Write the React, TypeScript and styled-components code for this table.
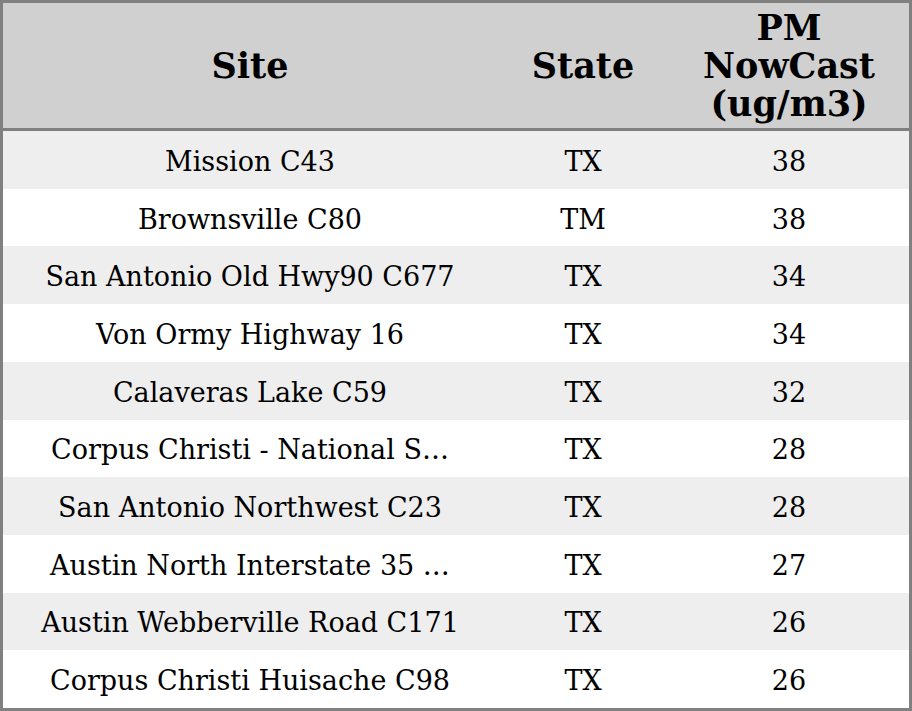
import React from 'react'
import styled, { createGlobalStyle } from 'styled-components'

const rows = [
    { site: 'Mission C43', state: 'TX', value: 38 },
    { site: 'Brownsville C80', state: 'TM', value: 38 },
    { site: 'San Antonio Old Hwy90 C677', state: 'TX', value: 34 },
    { site: 'Von Ormy Highway 16', state: 'TX', value: 34 },
    { site: 'Calaveras Lake C59', state: 'TX', value: 32 },
    { site: 'Corpus Christi - National Seashore C314', state: 'TX', value: 28 },
    { site: 'San Antonio Northwest C23', state: 'TX', value: 28 },
    { site: 'Austin North Interstate 35 C1068', state: 'TX', value: 27 },
    { site: 'Austin Webberville Road C171', state: 'TX', value: 26 },
    { site: 'Corpus Christi Huisache C98', state: 'TX', value: 26 },
]

// long site names are cut to 27 characters, as the source table does
const shorten = (name: string) => (name.length > 30 ? `${name.slice(0, 27)}\u2026` : name)

const App: React.FunctionComponent = () => (
    <>
        <GlobalStyle />
        <Table>
            <HeaderRow>
                <HeaderCell>Site</HeaderCell>
                <HeaderCell>State</HeaderCell>
                <HeaderCell>PM<br />NowCast<br />(ug/m3)</HeaderCell>
            </HeaderRow>
            {rows.map((row, i) => (
                <Row key={row.site} $striped={i % 2 === 0}>
                    <Cell>{shorten(row.site)}</Cell>
                    <Cell>{row.state}</Cell>
                    <Cell>{row.value}</Cell>
                </Row>
            ))}
        </Table>
    </>
)

export default App

const GlobalStyle = createGlobalStyle`
    html, body {
        margin: 0;
        padding: 0;
        background: #ffffff;
    }
    body {
        font-family: "DejaVu Serif", serif;
        color: #000000;
    }
`

const Table = styled.div`
    box-sizing: border-box;
    width: 912px;
    height: 711px;
    border: 3px solid #808080;
    display: flex;
    flex-direction: column;
`

const HeaderRow = styled.div`
    display: grid;
    grid-template-columns: 494px 172px 1fr;
    height: 125px;
    flex: none;
    background: #d0d0d0;
    border-bottom: 3px solid #808080;
`

const HeaderCell = styled.div`
    display: flex;
    align-items: center;
    justify-content: center;
    text-align: center;
    font-weight: bold;
    font-size: 35px;
    line-height: 38px;
`

const Row = styled.div<{ $striped: boolean }>`
    display: grid;
    grid-template-columns: 494px 172px 1fr;
    flex: 1;
    align-items: center;
    background: ${({ $striped }) => ($striped ? '#eeeeee' : '#ffffff')};
`

const Cell = styled.div`
    text-align: center;
    font-size: 27px;
    white-space: nowrap;
    padding-top: 3px;
`
